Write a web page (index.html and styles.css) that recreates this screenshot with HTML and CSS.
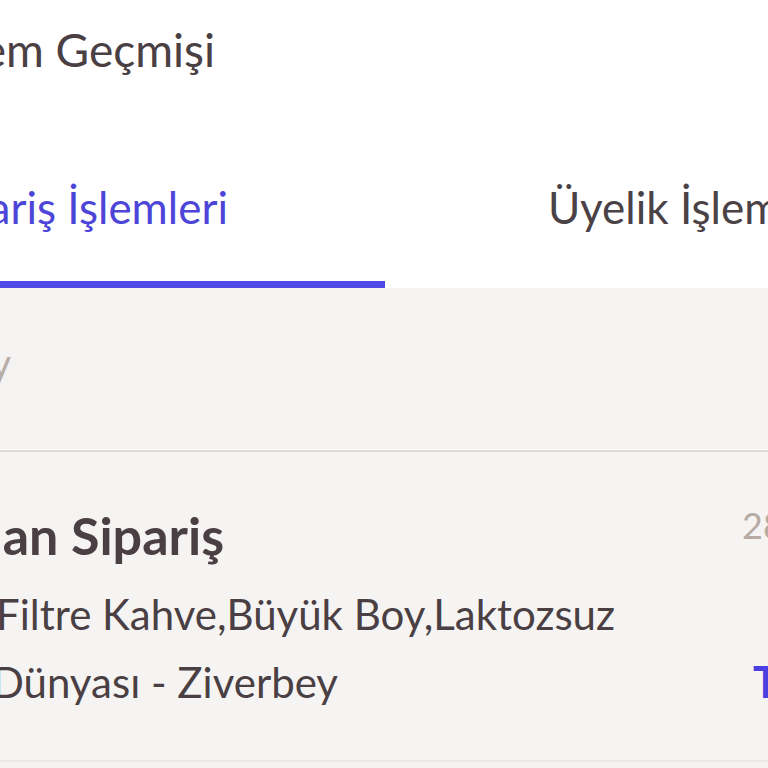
FILE: index.html
```html
<!DOCTYPE html>
<html lang="tr">
<head>
<meta charset="utf-8">
<title>İşlem Geçmişi</title>
<link rel="stylesheet" href="styles.css">
</head>
<body>
<div class="page">
  <header class="header">
    <div class="title-row">
      <h1 class="title">İşlem Geçmişi</h1>
    </div>
    <nav class="tabs">
      <div class="tab tab-active"><span>Sipariş İşlemleri</span></div>
      <div class="tab tab-idle"><span>Üyelik İşlemleri</span></div>
    </nav>
  </header>
  <main class="content">
    <div class="section-label"><span>Bu Ay</span></div>
    <div class="divider"></div>
    <section class="card">
      <div class="line line-title"><span>Tamamlanan Sipariş</span></div>
      <div class="date">28 Haz 2024</div>
      <div class="line line-items"><span>1x Filtre Kahve,Büyük Boy,Laktozsuz</span></div>
      <div class="spacer"></div>
      <div class="line line-store"><span>Kahve Dünyası - Ziverbey</span></div>
      <div class="price">TL 45,00</div>
    </section>
  </main>
</div>
</body>
</html>
```

FILE: styles.css
```css
html, body {
  margin: 0;
  padding: 0;
  overflow: hidden;
  width: 768px;
  height: 768px;
}
body {
  font-family: Lato, "Noto Sans", sans-serif;
  background: #f5f3f2;
  color: #4a4044;
}
.page {
  width: 768px;
  height: 768px;
  overflow: hidden;
}
.header {
  background: #ffffff;
}
.title-row {
  padding-top: 20px;
  height: 59px;
  display: flex;
  width: 215px;
  justify-content: flex-end;
}
.title {
  margin: 0;
  font-size: 46px;
  line-height: 60px;
  font-weight: 400;
  white-space: nowrap;
  color: #4a4044;
}
.tabs {
  display: flex;
  height: 209px;
}
.tab {
  box-sizing: border-box;
  padding-top: 102px;
  font-size: 44px;
  line-height: 52px;
  white-space: nowrap;
  display: flex;
}
.tab-active {
  width: 385px;
  flex: none;
  padding-right: 157px;
  justify-content: flex-end;
  color: #4c45d8;
  border-bottom: 7px solid #4f47e6;
}
.tab-idle {
  flex: 1;
  padding-left: 163px;
  color: #4a4246;
}
.content {
  background: #f5f3f2;
}
.section-label {
  box-sizing: border-box;
  height: 161px;
  padding-top: 51px;
  width: 11px;
  display: flex;
  justify-content: flex-end;
  font-size: 40px;
  line-height: 48px;
  white-space: nowrap;
  color: #b9ada7;
}
.divider {
  height: 2px;
  background: #e2d9d5;
  border-top: 1px solid #fdfcfb;
}
.card {
  box-sizing: border-box;
  height: 310px;
  padding-top: 52px;
  display: grid;
  grid-template-columns: 742px auto;
  grid-template-rows: 62px 68px 68px;
  row-gap: 0;
  border-bottom: 2px solid #ece8e6;
  background: #f6f4f2;
}
.line {
  display: flex;
  justify-content: flex-end;
  white-space: nowrap;
  justify-self: start;
}
.line-title {
  width: 224px;
  font-size: 52px;
  line-height: 62px;
  font-weight: 700;
  color: #4a3f42;
}
.line-items {
  margin-top: 14px;
  width: 615px;
  font-size: 42px;
  line-height: 68px;
}
.line-store {
  margin-top: 14px;
  width: 338px;
  font-size: 42px;
  line-height: 68px;
}
.date {
  align-self: start;
  white-space: nowrap;
  font-size: 36px;
  line-height: 42px;
  color: #b7aba4;
}
.price {
  margin-top: 14px;
  margin-left: 11px;
  white-space: nowrap;
  font-size: 43px;
  line-height: 68px;
  font-weight: 700;
  color: #4a3fe0;
}
```
